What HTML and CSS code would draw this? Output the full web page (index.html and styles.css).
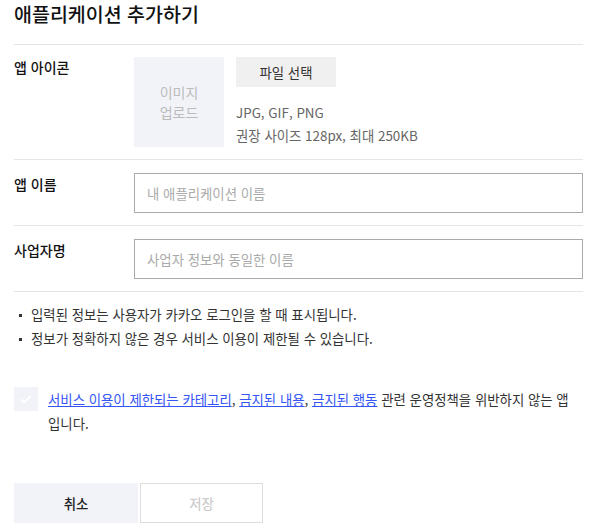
FILE: index.html
```html
<!DOCTYPE html>
<html lang="ko">
<head>
<meta charset="utf-8">
<link rel="stylesheet" href="styles.css">
</head>
<body>
<div class="page">
  <h1 class="title">애플리케이션 추가하기</h1>
  <div class="row row-icon">
    <div class="label">앱 아이콘</div>
    <div class="field icon-field">
      <div class="upload-box">이미지<br>업로드</div>
      <div class="upload-info">
        <button class="file-btn">파일 선택</button>
        <p class="hint">JPG, GIF, PNG</p>
        <p class="hint">권장 사이즈 128px, 최대 250KB</p>
      </div>
    </div>
  </div>
  <div class="row">
    <div class="label">앱 이름</div>
    <div class="field"><input class="text-input" placeholder="내 애플리케이션 이름"></div>
  </div>
  <div class="row">
    <div class="label">사업자명</div>
    <div class="field"><input class="text-input" placeholder="사업자 정보와 동일한 이름"></div>
  </div>
  <ul class="notes">
    <li>입력된 정보는 사용자가 카카오 로그인을 할 때 표시됩니다.</li>
    <li>정보가 정확하지 않은 경우 서비스 이용이 제한될 수 있습니다.</li>
  </ul>
  <div class="agree">
    <span class="check"><svg width="14" height="12" viewBox="0 0 14 12"><path d="M2 6.2 L5.4 9.4 L12 2.6" fill="none" stroke="#fff" stroke-width="1.8"/></svg></span>
    <p class="agree-text"><a href="#">서비스 이용이 제한되는 카테고리</a>, <a href="#">금지된 내용</a>, <a href="#">금지된 행동</a> 관련 운영정책을 위반하지 않는 앱입니다.</p>
  </div>
  <div class="actions">
    <button class="btn cancel">취소</button>
    <button class="btn save">저장</button>
  </div>
</div>
</body>
</html>
```
FILE: styles.css
```css
* { box-sizing: border-box; }
body {
  margin: 0;
  font-family: "Noto Sans CJK KR", "Noto Sans", sans-serif;
  color: #222;
  background: #fff;
}
.page {
  width: 583px;
  padding-left: 14px;
}
.title {
  margin: 0;
  font-size: 19.5px;
  font-weight: 500;
  line-height: 28px;
  height: 45px;
  border-bottom: 1px solid #e5e5e5;
  color: #111;
}
.row {
  display: flex;
  border-bottom: 1px solid #e5e5e5;
  padding: 12px 0;
}
.row-icon .label { margin-top: -2px; }
.label {
  width: 120px;
  font-size: 14px;
  font-weight: 500;
  line-height: 24px;
  color: #111;
}
.field { flex: 1; }
.icon-field { display: flex; gap: 12px; }
.upload-box {
  width: 90px;
  height: 90px;
  background: #f2f3f8;
  color: #bbb;
  font-size: 14px;
  line-height: 20px;
  display: flex;
  align-items: center;
  justify-content: center;
  text-align: center;
}
.upload-info { display: flex; flex-direction: column; align-items: flex-start; }
.file-btn {
  width: 100px;
  height: 30px;
  border: 0;
  background: #f0f0f0;
  font-family: inherit;
  font-size: 13.4px;
  color: #333;
  padding: 0;
  margin-bottom: 14px;
}
.hint {
  margin: 0;
  font-size: 13.4px;
  line-height: 23px;
  color: #666;
}
.text-input {
  width: 100%;
  height: 40px;
  border: 1px solid #aaa;
  padding: 0 12px;
  font-family: inherit;
  font-size: 13.4px;
  outline: none;
  margin-top: 1px;
}
.text-input::placeholder { color: #aaa; }
.notes {
  list-style: none;
  margin: 0;
  padding: 10px 0 0;
}
.notes li {
  position: relative;
  padding-left: 17px;
  font-size: 13.4px;
  line-height: 24px;
  color: #333;
}
.notes li::before {
  content: "";
  position: absolute;
  left: 5px;
  top: 12px;
  width: 3px;
  height: 3px;
  background: #333;
}
.agree {
  display: flex;
  gap: 10px;
  margin-top: 37px;
}
.check {
  flex: none;
  width: 24px;
  height: 24px;
  background: #f2f3f8;
  display: flex;
  align-items: center;
  justify-content: center;
}
.agree-text {
  margin: 0;
  font-size: 13.4px;
  line-height: 24px;
  color: #333;
  width: 530px;
}
.agree-text a { color: #3454f5; }
.actions {
  display: flex;
  gap: 2px;
  margin-top: 48px;
}
.btn {
  width: 124px;
  height: 40px;
  font-family: inherit;
  font-size: 13.4px;
  font-weight: 500;
  padding: 0;
}
.cancel { background: #f2f3f8; border: 0; color: #222; }
.save { background: #fff; border: 1px solid #ddd; color: #ccc; width: 123px; }
```
